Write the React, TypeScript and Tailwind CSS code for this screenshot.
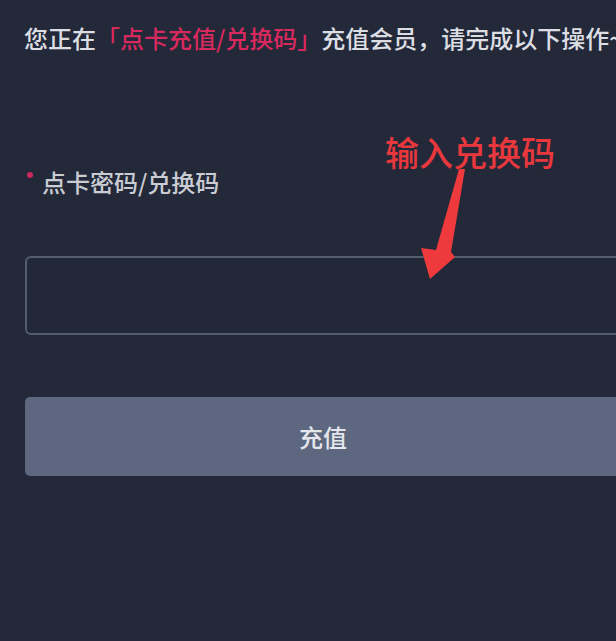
import React from "react";

const copy = {
  lead: "您正在",
  method: "「点卡充值/兑换码」",
  tail: "充值会员，请完成以下操作~",
  label: "点卡密码/兑换码",
  hint: "输入兑换码",
  submit: "充值"
};

function HintArrow() {
  return (
    <svg
      className="pointer-events-none absolute left-0 top-0"
      width="616"
      height="641"
      viewBox="0 0 616 641"
      aria-hidden="true"
    >
      <polygon
        points="459,169 465,169 451,252 455,257 430,279 421,248 436,250"
        fill="#ee3a3c"
      />
    </svg>
  );
}

export default function App() {
  return (
    <div
      className="relative h-[641px] w-[616px] overflow-hidden bg-[#232939] pl-[24px]"
      style={{ fontFamily: '"Noto Sans CJK SC", "Noto Sans", sans-serif' }}
    >
      <p className="whitespace-nowrap pt-[20px] text-[24px] font-medium leading-[36px] text-[#dcdee3]">
        {copy.lead}
        <span className="text-[#d8295f]">{copy.method}</span>
        {copy.tail}
      </p>

      <div className="mt-[108px] flex items-center text-[24px] font-medium leading-[36px] text-[#c9ccd3]">
        <span className="-mt-[14px] ml-[3px] mr-[9px] h-[6px] w-[6px] rounded-full bg-[#c8285d]" />
        <span>{copy.label}</span>
      </div>

      <div className="ml-[1px] mt-[56px] h-[79px] w-[596px] rounded-[6px] border-2 border-[#555c6c] bg-[#232839]" />

      <button
        type="button"
        className="ml-[1px] mt-[62px] flex h-[79px] w-[596px] items-center justify-center rounded-[5px] bg-[#5d6780] text-[24px] font-medium text-[#e4e6ea]"
      >
        {copy.submit}
      </button>

      <p className="absolute left-[385px] top-[130px] whitespace-nowrap text-[34px] font-medium leading-[44px] text-[#e8383d]">
        {copy.hint}
      </p>
      <HintArrow />
    </div>
  );
}
